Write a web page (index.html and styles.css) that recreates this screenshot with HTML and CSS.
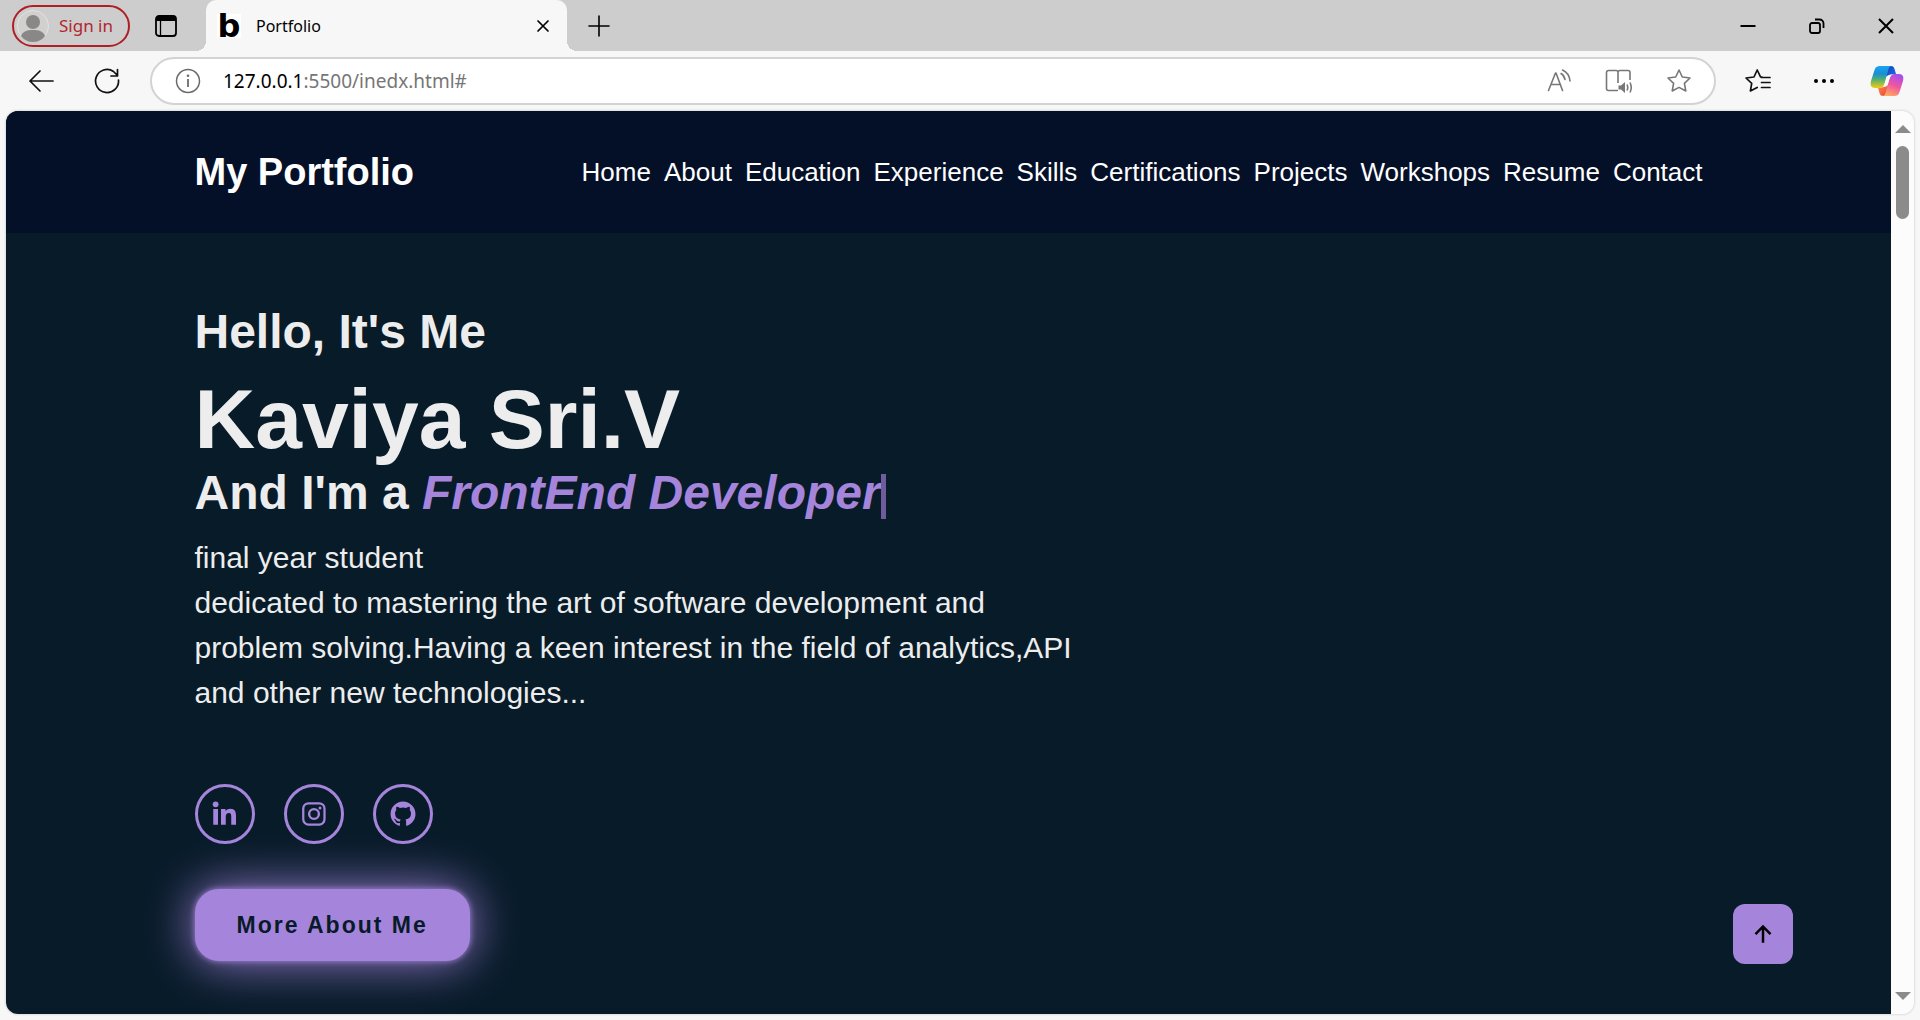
FILE: index.html
```html
<!DOCTYPE html>
<html lang="en">
<head>
<meta charset="utf-8">
<meta name="viewport" content="width=device-width, initial-scale=1">
<title>Portfolio</title>
<link rel="stylesheet" href="styles.css">
</head>
<body>
<div class="browser">
  <div class="tabstrip">
    <button class="signin" type="button">
      <svg class="avatar" viewBox="0 0 32 32" aria-hidden="true"><circle cx="16" cy="16" r="15.500" fill="#d2d0ce" stroke="#e4e2e0"/><circle cx="16" cy="12" r="7" fill="#8a8886"/><path d="M4 26c2-5 6-6 12-6s10 1 12 6c-3 4-7 6-12 6s-9-2-12-6z" fill="#8a8886"/></svg>
      <span>Sign in</span>
    </button>
    <button class="icon-btn tab-actions" type="button" aria-label="Tab actions">
      <svg width="22" height="22" viewBox="0 0 22 22"><rect x="1" y="1" width="20" height="20" rx="3" fill="none" stroke="#000" stroke-width="1.800"/><path d="M1 6V4a3 3 0 0 1 3-3h14a3 3 0 0 1 3 3v2z"/><path d="M5.500 6v15" stroke="#000" stroke-width="1.300"/></svg>
    </button>
    <div class="tab">
      <span class="favicon" aria-hidden="true">b</span>
      <span class="tab-title">Portfolio</span>
      <button class="icon-btn tab-close" type="button" aria-label="Close tab">
        <svg width="14" height="14" viewBox="0 0 14 14"><path d="M2 2l10 10M12 2L2 12" stroke="#000" stroke-width="1.700" stroke-linecap="round"/></svg>
      </button>
    </div>
    <button class="icon-btn new-tab" type="button" aria-label="New tab">
      <svg width="22" height="22" viewBox="0 0 22 22"><path d="M11 1v20M1 11h20" stroke="#000" stroke-width="1.600" stroke-linecap="round"/></svg>
    </button>
    <div class="window-controls">
      <button class="icon-btn" type="button" aria-label="Minimize"><svg width="16" height="16" viewBox="0 0 16 16"><path d="M.5 8h15" stroke="#000" stroke-width="2"/></svg></button>
      <button class="icon-btn" type="button" aria-label="Restore"><svg width="16" height="16" viewBox="0 0 16 16" fill="none" stroke="#000" stroke-width="1.800"><rect x="1" y="5" width="10" height="10" rx="2"/><path d="M6 1.500h4.500a4 4 0 0 1 4 4V10"/></svg></button>
      <button class="icon-btn" type="button" aria-label="Close"><svg width="16" height="16" viewBox="0 0 16 16"><path d="M1 1l14 14M15 1L1 15" stroke="#000" stroke-width="2"/></svg></button>
    </div>
  </div>
  <div class="toolbar">
    <button class="icon-btn nav-btn" type="button" aria-label="Back"><svg width="26" height="24" viewBox="0 0 26 24" fill="none" stroke="#111" stroke-width="1.700" stroke-linecap="round" stroke-linejoin="round"><path d="M25 12H2M12 2L2 12l10 10"/></svg></button>
    <button class="icon-btn nav-btn" type="button" aria-label="Refresh"><svg width="26" height="26" viewBox="0 0 26 26" fill="none" stroke="#111" stroke-width="1.700" stroke-linecap="round" stroke-linejoin="round"><path d="M24.500 12A11.500 11.500 0 1 1 19.500 3.500l3.500 3.500M23.500 1.500V8H17"/></svg></button>
    <div class="address">
      <svg class="info" width="26" height="26" viewBox="0 0 26 26" fill="none" stroke="#6b6b6b" stroke-width="1.500" aria-hidden="true"><circle cx="13" cy="13" r="11.500"/><path d="M13 11v8" stroke-width="1.800"/><circle cx="13" cy="7.800" r="1.300" fill="#6b6b6b" stroke="none"/></svg>
      <span class="url"><b>127.0.0.1</b>:5500/inedx.html#</span>
      <button class="icon-btn" type="button" aria-label="Read aloud"><svg width="24" height="24" viewBox="0 0 24 24" fill="none" stroke="#777" stroke-width="1.600" stroke-linecap="round" stroke-linejoin="round"><path d="M1.500 21.500l7-17.500h.5l6.500 17.500M4 15.500h9.500M14 4.500c2.500 1.300 3.500 3.300 4 6M15.500 1c4.500 2 7 6 7.500 11"/></svg></button>
      <button class="icon-btn" type="button" aria-label="Immersive reader"><svg width="28" height="24" viewBox="0 0 28 24" fill="none" stroke="#777" stroke-width="1.600" stroke-linejoin="round"><path d="M13 21.500H3.500a2 2 0 0 1-2-2v-16a2 2 0 0 1 2-2H11a2 2 0 0 1 2 2V14M13 3.500a2 2 0 0 1 2-2h8a2 2 0 0 1 2 2V11"/><path d="M13.500 16.500h2.500l4-3.500v11l-4-3.500h-2.500z" fill="#777" stroke="none"/><path d="M22 15.500q1.500 3 0 6M25 13.500q2.500 5 0 10"/></svg></button>
      <button class="icon-btn" type="button" aria-label="Add to favorites"><svg width="24" height="24" viewBox="0 0 24 24" fill="none" stroke="#777" stroke-width="1.600" stroke-linejoin="round"><path d="M12 1l3.300 7 7.700 1-5.600 5.300 1.400 7.700L12 18.400 5.200 22l1.400-7.700L1 9l7.700-1z"/></svg></button>
    </div>
    <button class="icon-btn favorites" type="button" aria-label="Favorites"><svg width="26" height="24" viewBox="0 0 26 24" fill="none" stroke="#111" stroke-width="1.700" stroke-linejoin="round" stroke-linecap="round"><path d="M17 8l-1.500-.2L12.200 1 9 8 1 9l5.700 5.300L5.400 22l6.800-3.600M16.500 8.500H25M16.500 13.500H25M16.500 18.500H25"/></svg></button>
    <button class="icon-btn more" type="button" aria-label="Settings and more"><svg width="20" height="4" viewBox="0 0 20 4"><circle cx="2" cy="2" r="2"/><circle cx="10" cy="2" r="2"/><circle cx="18" cy="2" r="2"/></svg></button>
    <button class="icon-btn copilot" type="button" aria-label="Copilot">
      <svg width="34" height="32" viewBox="0 0 34 32">
        <defs>
          <linearGradient id="cp-left" x1="0" y1="0" x2="0" y2="1"><stop offset="0" stop-color="#1ba4ee"/><stop offset=".35" stop-color="#188fd8"/><stop offset=".6" stop-color="#4fae72"/><stop offset="1" stop-color="#f4cb10"/></linearGradient>
          <linearGradient id="cp-right" x1=".7" y1="0" x2=".3" y2="1"><stop offset="0" stop-color="#a54ef0"/><stop offset=".5" stop-color="#f0569f"/><stop offset="1" stop-color="#ffab5e"/></linearGradient>
          <linearGradient id="cp-top" x1="0" y1="0" x2="1" y2="1"><stop offset="0" stop-color="#1540c0"/><stop offset="1" stop-color="#1d6ee0"/></linearGradient>
          <linearGradient id="cp-bottom" x1="0" y1="0" x2="1" y2="1"><stop offset="0" stop-color="#ff8a3c"/><stop offset="1" stop-color="#e8404a"/></linearGradient>
        </defs>
        <path d="M17 1h4c2 0 3 1 3.500 3L26 9c-3 0-5 0-7 1l-4 2z" fill="url(#cp-top)"/>
        <path d="M17 31h-4c-2 0-3-1-3.500-3L8 22.500c3 0 5 0 7-1l4-2z" fill="url(#cp-bottom)"/>
        <path d="M10 1h12c-2 0-3 1-3.500 3l-4 14.500c-1 3-2.500 4.500-5 4.500H5c-4 0-5-3-4-7L4.500 5c1-3 2.500-4 5.500-4z" fill="url(#cp-left)"/>
        <path d="M24 31H12c2 0 3-1 3.500-3l4-14.500c1-3 2.500-4.500 5-4.500H29c4 0 5 3 4 7l-3.500 11c-1 3-2.500 4-5.500 4z" fill="url(#cp-right)"/>
        <path d="M19 10.500h2.500c-1 .7-1.600 1.700-2 3l-2 6.500c-.4 1-1.500 1.500-3 1.500h-1c.6-.7 1-1.500 1.300-2.500l2-6.500c.3-1 1-1.800 2.200-2z" fill="#fff"/>
      </svg>
    </button>
  </div>
  <div class="viewport">
    <div class="page">
      <header class="header">
        <a class="logo" href="#">My Portfolio</a>
        <nav class="navbar">
          <a href="#home">Home</a>
          <a href="#about">About</a>
          <a href="#education">Education</a>
          <a href="#experience">Experience</a>
          <a href="#skills">Skills</a>
          <a href="#certifications">Certifications</a>
          <a href="#projects">Projects</a>
          <a href="#workshops">Workshops</a>
          <a href="#resume">Resume</a>
          <a href="#contact">Contact</a>
        </nav>
      </header>
      <main class="home" id="home">
        <h3>Hello, It's Me</h3>
        <h1>Kaviya Sri.V</h1>
        <h3>And I'm a <em class="typed">FrontEnd Developer</em></h3>
        <p>final year student<br>dedicated to mastering the art of software development and problem solving.Having a keen interest in the field of analytics,API and other new technologies...</p>
        <div class="social">
          <a href="#" aria-label="LinkedIn"><svg width="30" height="30" viewBox="0 0 24 24"><circle cx="4.500" cy="4.200" r="2.300"/><path d="M2.600 8h3.800v12.500H2.600zM8.800 8h3.600v1.700c.6-1.100 1.900-2 3.800-2 3.900 0 4.600 2.500 4.600 5.900v6.900H17v-6.100c0-1.400 0-3.200-1.900-3.200s-2.500 1.400-2.500 3.100v6.200H8.800z"/></svg></a>
          <a href="#" aria-label="Instagram"><svg width="30" height="30" viewBox="0 0 24 24"><rect x="3.400" y="3.400" width="17" height="17" rx="4.200" fill="none" stroke="#a585db" stroke-width="1.800"/><circle cx="12" cy="12" r="3.900" fill="none" stroke="#a585db" stroke-width="1.900"/><circle cx="16.800" cy="7.200" r="1.200"/></svg></a>
          <a href="#" aria-label="GitHub"><svg width="30" height="30" viewBox="0 0 24 24"><path d="M12.026 2c-5.509 0-9.974 4.465-9.974 9.974 0 4.406 2.857 8.145 6.821 9.465.499.09.679-.217.679-.481 0-.237-.008-.865-.011-1.696-2.775.602-3.361-1.338-3.361-1.338-.452-1.152-1.107-1.459-1.107-1.459-.905-.619.069-.605.069-.605 1.002.07 1.527 1.028 1.527 1.028.89 1.524 2.336 1.084 2.902.829.091-.645.351-1.085.635-1.334-2.214-.251-4.542-1.107-4.542-4.930 0-1.087.389-1.979 1.024-2.675-.101-.253-.446-1.268.099-2.640 0 0 .837-.269 2.742 1.021a9.582 9.582 0 0 1 2.496-.336 9.554 9.554 0 0 1 2.496.336c1.906-1.291 2.742-1.021 2.742-1.021.545 1.372.203 2.387.099 2.640.64.696 1.024 1.587 1.024 2.675 0 3.833-2.330 4.675-4.552 4.922.355.308.675.916.675 1.846 0 1.334-.012 2.410-.012 2.737 0 .267.178.577.687.479C19.146 20.115 22 16.379 22 11.974 22 6.465 17.535 2 12.026 2z"/></svg></a>
        </div>
        <a class="btn" href="#about">More About Me</a>
      </main>
      <a class="to-top" href="#home" aria-label="Back to top"><svg width="30" height="30" viewBox="0 0 24 24"><path d="M11 8.400V19h2V8.400l4.300 4.300 1.400-1.400L12 4.600l-6.700 6.700 1.400 1.400z"/></svg></a>
    </div>
    <div class="scrollbar" aria-hidden="true">
      <svg width="16" height="8" viewBox="0 0 16 8"><path d="M8 0l8 8H0z" fill="#8b8b8b"/></svg>
      <div class="thumb"></div>
      <svg width="16" height="8" viewBox="0 0 16 8"><path d="M8 8L0 0h16z" fill="#8b8b8b"/></svg>
    </div>
  </div>
</div>
</body>
</html>
```
FILE: styles.css
```css
* { box-sizing: border-box; margin: 0; padding: 0; }

body { background: #f7f7f7; font-family: "Liberation Sans", Arial, sans-serif; }
a { color: inherit; text-decoration: none; }
svg { display: block; }

.browser { display: flex; flex-direction: column; min-height: 100vh; padding-bottom: 6px; }

.icon-btn {
  display: flex; align-items: center; justify-content: center;
  flex: none; border: 0; background: none;
}

/* Tab strip */
.tabstrip {
  display: flex; align-items: center; height: 51px; padding-left: 12px;
  background: #cdcdcd; font-family: "Noto Sans", "Open Sans", sans-serif;
}
.signin {
  display: flex; align-items: center; gap: 10px; width: 118px; height: 42px;
  padding: 0 3px; border: 2px solid #ad1f25; border-radius: 21px;
  background: none; color: #b3262c; font: inherit; font-size: 17px; white-space: nowrap;
}
.avatar { width: 32px; height: 32px; flex: none; }
.tab-actions { width: 44px; height: 42px; margin-left: 14px; }
.tab {
  position: relative; display: flex; align-items: center; align-self: stretch;
  width: 361px; margin-left: 18px; padding: 0 16px 0 11px;
  border-radius: 10px 10px 0 0; background: #f7f7f7;
}
.tab::before, .tab::after {
  content: ""; position: absolute; bottom: 0; width: 10px; height: 10px;
}
.tab::before { left: -10px; background: radial-gradient(circle at 0 0, transparent 10px, #f7f7f7 10px); }
.tab::after { right: -10px; background: radial-gradient(circle at 100% 0, transparent 10px, #f7f7f7 10px); }
.favicon {
  display: flex; justify-content: center;
  width: 24px; height: 24px; background: #fff; color: #000;
  font: 700 32px/24px "DejaVu Sans", sans-serif;
}
.tab-title { flex: 1; padding-left: 15px; font-size: 16px; }
.tab-close { width: 16px; height: 16px; }
.new-tab { width: 44px; height: 42px; margin-left: 10px; }
.window-controls { display: flex; align-self: stretch; margin-left: auto; }
.window-controls .icon-btn { width: 69px; }

/* Toolbar */
.toolbar {
  display: flex; align-items: center; height: 60px; padding: 0 16px 0 8px;
  font-family: "Noto Sans", "Open Sans", sans-serif;
}
.nav-btn { width: 66px; height: 40px; }
.address {
  display: flex; align-items: center; flex: 1; gap: 34px; height: 48px;
  margin-left: 10px; padding: 0 23px; border: 2px solid #d3d3d3;
  border-radius: 24px; background: #fff;
}
.info { flex: none; margin-right: -12px; }
.url { flex: 1; color: #767676; font-size: 19px; }
.url b { color: #000; font-weight: 400; }
.favorites { width: 26px; margin-left: 29px; }
.more { width: 20px; margin-left: 43px; }
.copilot { width: 34px; margin-left: 36px; }

/* Page frame */
.viewport {
  display: flex; flex: 1; margin: 0 6px; overflow: hidden;
  border-radius: 12px; background: #fcfcfc; box-shadow: 0 0 2px 1px #dedede;
}
.page { position: relative; flex: 1; background: #081b29; color: #ededed; }
.scrollbar {
  display: flex; flex-direction: column; align-items: center;
  width: 23px; padding: 14px 0;
}
.thumb { width: 13px; height: 73px; margin: 13px 0 auto; border-radius: 7px; background: #8b8b8b; }

.header {
  display: flex; align-items: center; justify-content: space-between;
  height: 122px; padding: 0 10%; background: #041028; color: #fff;
}
.logo { font-size: 38px; font-weight: 700; }
.navbar { display: flex; gap: 13px; font-size: 26px; }

.home { display: flex; flex-direction: column; align-items: flex-start; padding: 71px 10% 52px; }
h3 { font-size: 48px; line-height: 56px; }
h1 { padding-top: 14px; font-size: 84px; line-height: 91px; }
.typed { color: #a585db; }
.typed::after {
  content: ""; display: inline-block; width: 5px; height: 45px;
  background: #6e5c9c; vertical-align: -10px;
}
.home p { width: 900px; max-width: 100%; margin-top: 14px; font-size: 30px; line-height: 45px; }
.social { display: flex; gap: 29px; margin: 69px 0 45px; }
.social a {
  display: flex; align-items: center; justify-content: center;
  width: 60px; height: 60px; border: 3px solid #a585db; border-radius: 50%;
}
.social svg { fill: #a585db; }
.btn {
  padding: 0 42px; border-radius: 24px; background: #a585db; color: #081b29;
  font-size: 23px; font-weight: 700; line-height: 72px; letter-spacing: 2px;
  box-shadow: 0 0 6px #a585db, 0 0 50px #a585db;
}
.to-top {
  position: absolute; right: 98px; bottom: 50px;
  display: flex; align-items: center; justify-content: center;
  width: 60px; height: 60px; border-radius: 12px; background: #a585db; color: #000;
}
```
